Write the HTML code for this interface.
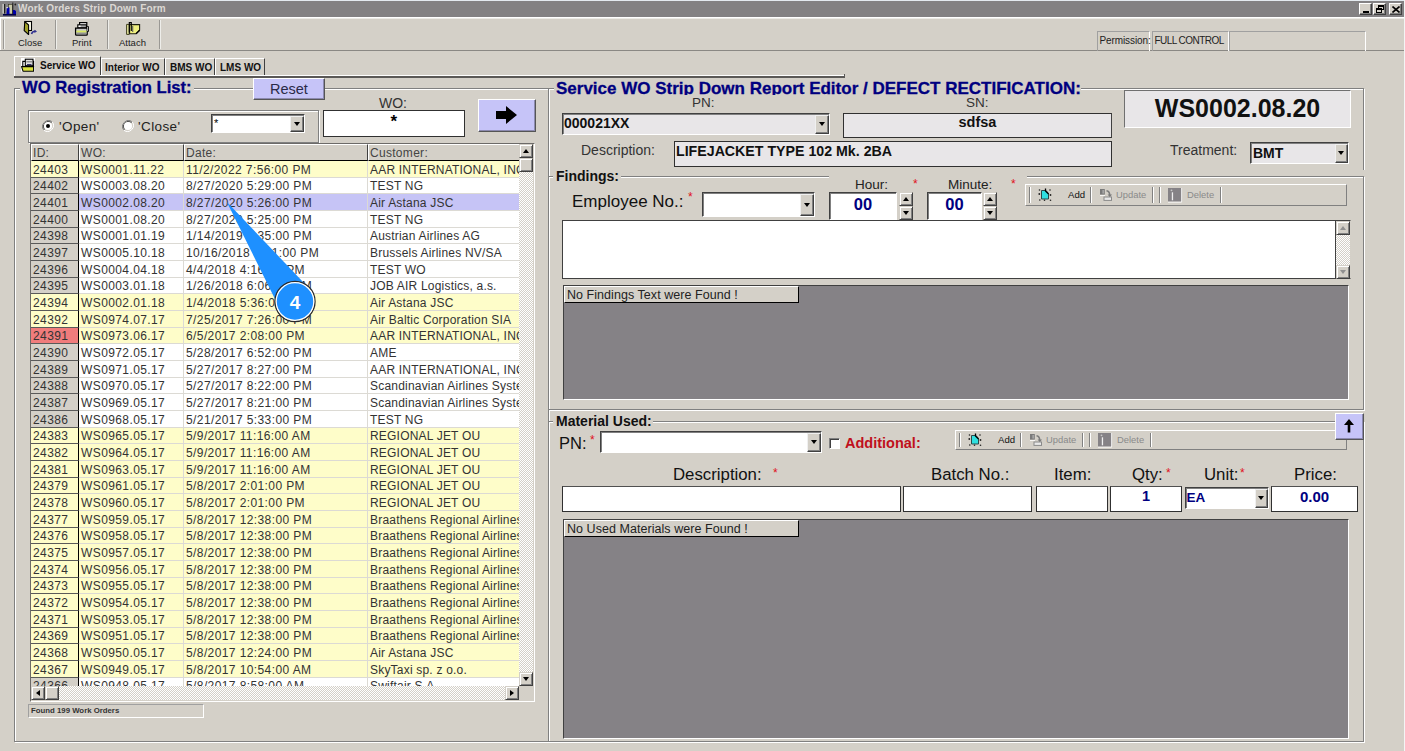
<!DOCTYPE html><html><head><meta charset="utf-8"><title>Work Orders Strip Down Form</title><style>
*{box-sizing:border-box;margin:0;padding:0}
html,body{width:1405px;height:751px;overflow:hidden}
body{position:relative;background:#d4d0c8;font-family:"Liberation Sans",sans-serif;color:#000}
.a{position:absolute}
.t{position:absolute;white-space:nowrap;line-height:1}
.grp{position:absolute;border:1px solid #808080;box-shadow:inset 1px 1px 0 #fff,1px 1px 0 #fff}
.sunk{position:absolute;border-top:1px solid #808080;border-left:1px solid #808080;border-right:1px solid #fff;border-bottom:1px solid #fff}
.raise{position:absolute;border-top:1px solid #fff;border-left:1px solid #fff;border-right:1px solid #404040;border-bottom:1px solid #404040;background:#d4d0c8}
.inp{position:absolute;border:1px solid #404040;border-right-color:#fff;border-bottom-color:#fff;box-shadow:inset 1px 1px 0 #808080}
.box{position:absolute;background:#fff;border:1px solid #303030}
.vsep{position:absolute;width:2px;border-left:1px solid #808080;border-right:1px solid #fff}
</style></head><body>
<div class="a" style="left:0;top:0;width:1405px;height:1px;background:#e4eaf0"></div>
<div class="a" style="left:0;top:1px;width:1404px;height:16px;background:#838183"></div>
<svg class="a" style="left:0px;top:0px" width="18" height="17" viewBox="0 0 18 17">
<rect x="2.6" y="4" width="1" height="9.5" fill="#e8e8e0"/>
<rect x="4" y="4" width="1.2" height="9.5" fill="#202020"/>
<rect x="8.5" y="4.3" width="4" height="9.7" fill="#c8c8a8" stroke="#303020" stroke-width="0.6"/>
<rect x="12.3" y="2.5" width="1" height="11.5" fill="#202020"/>
<circle cx="15.3" cy="4.5" r="0.9" fill="#202020"/>
<path d="M7 7.5 h2.5 v6.5 h-3z" fill="#0000b0"/>
<rect x="6.5" y="7" width="1.2" height="1.2" fill="#fff"/>
<path d="M13 10 h1.5 l1.5 1 v4 h-3z" fill="#0000a8"/>
<rect x="3" y="14" width="13" height="1.6" fill="#000048"/>
</svg>
<div class="t" style="left:18px;top:4px;font-size:10px;font-weight:bold;color:#dcd8d4;letter-spacing:0.15px">Work Orders Strip Down Form</div>
<div class="raise" style="left:1359px;top:3px;width:13px;height:12px;border-right-color:#404040;border-bottom-color:#404040;box-shadow:inset -1px -1px 0 #808080"><div class="a" style="left:3px;top:7px;width:6px;height:2px;background:#000"></div></div>
<div class="raise" style="left:1373px;top:3px;width:13px;height:12px;border-right-color:#404040;border-bottom-color:#404040;box-shadow:inset -1px -1px 0 #808080"><div class="a" style="left:4px;top:1px;width:6px;height:5px;border:1px solid #000;border-top-width:2px"></div><div class="a" style="left:2px;top:4px;width:6px;height:5px;border:1px solid #000;border-top-width:2px;background:#d4d0c8"></div></div>
<div class="raise" style="left:1389px;top:3px;width:13px;height:12px;border-right-color:#404040;border-bottom-color:#404040;box-shadow:inset -1px -1px 0 #808080"><svg class="a" style="left:2px;top:2px" width="8" height="7" viewBox="0 0 8 7"><path d="M0.5 0.5L7.5 6.5M7.5 0.5L0.5 6.5" stroke="#000" stroke-width="1.6"/></svg></div>
<div class="a" style="left:1404px;top:0;width:1px;height:751px;background:#f4f4f4"></div>
<div class="a" style="left:0;top:17px;width:1404px;height:1px;background:#fff"></div>
<div class="a" style="left:0;top:18px;width:1404px;height:1px;background:#ecebe6"></div>
<div class="a" style="left:0;top:17px;width:1px;height:34px;background:#fff"></div>
<div class="a" style="left:0;top:50px;width:1404px;height:1px;background:#8a8884"></div>
<div class="vsep" style="left:3px;top:20px;height:29px;border-left-color:#9a9894;border-right-color:#eeeeea"></div>
<div class="vsep" style="left:55px;top:20px;height:29px;border-left-color:#9a9894;border-right-color:#eeeeea"></div>
<div class="vsep" style="left:107px;top:20px;height:29px;border-left-color:#9a9894;border-right-color:#eeeeea"></div>
<div class="vsep" style="left:159px;top:20px;height:29px;border-left-color:#9a9894;border-right-color:#eeeeea"></div>
<svg class="a" style="left:20px;top:19px" width="22" height="18" viewBox="0 0 22 18">
<rect x="5" y="2.5" width="6.5" height="9" fill="#fffff0" stroke="#000" stroke-width="1.1"/>
<path d="M4.8 2.6 L8.6 6 L8.6 15.5 L4.2 11.6 Z" fill="#a0a028" stroke="#000" stroke-width="1.1" stroke-linejoin="round"/>
<path d="M11.5 15 q1 -3 4 -2.8" stroke="#303090" stroke-width="1.5" fill="none"/>
<path d="M14.5 10.8 l2.5 1.6 l-2.6 1.5z" fill="#303090"/>
</svg>
<div class="t" style="left:18px;top:38px;font-size:9.5px;color:#222">Close</div>
<svg class="a" style="left:70px;top:19px" width="22" height="18" viewBox="0 0 22 18">
<rect x="9.6" y="3.6" width="7.2" height="3" fill="#fff" stroke="#000" stroke-width="1.2"/>
<rect x="7.8" y="5.8" width="8.6" height="3" fill="#a8a8a8" stroke="#000" stroke-width="1.1"/>
<rect x="8.6" y="6.6" width="2" height="1.5" fill="#fff"/>
<path d="M5.6 9.2 h11.6 v6.2 q0 0.8 -0.8 0.8 h-10 q-0.8 0 -0.8 -0.8z" fill="#c8c8c8" stroke="#000" stroke-width="1.3"/>
<rect x="6.4" y="11.6" width="10" height="2" fill="#d8e860"/>
<rect x="6.4" y="13.6" width="10" height="1.6" fill="#909090"/>
<path d="M17.2 7.5 h1.2 v5 h-1.2" fill="#d0d0d0" stroke="#000" stroke-width="1"/>
</svg>
<div class="t" style="left:72px;top:38px;font-size:9.5px;color:#222">Print</div>
<svg class="a" style="left:122px;top:19px" width="22" height="18" viewBox="0 0 22 18">
<path d="M4.6 5.4 h2.6 v10 h-2.6z" fill="#e8e8a0" stroke="#404020" stroke-width="1"/>
<path d="M7.6 5.6 h10 v5.6 l-3.6 3.6 h-6.4z" fill="#f0f080" stroke="#202010" stroke-width="1.1"/>
<path d="M14 14.8 l3.6 -3.6" stroke="#000" stroke-width="1.3"/>
<path d="M7.3 13.5 V3.6 h2 V12" stroke="#000" stroke-width="1.1" fill="none"/>
<rect x="10" y="7" width="1.3" height="6" fill="#707060"/>
</svg>
<div class="t" style="left:119px;top:38px;font-size:9.5px;color:#222">Attach</div>
<div class="a" style="left:1097px;top:31px;width:53px;height:20px;border-left:1px solid #a0a0a0;border-top:1px solid #a0a0a0;border-right:1px solid #fff"></div>
<div class="t" style="left:1099.5px;top:35.5px;font-size:10px;color:#222;letter-spacing:-0.1px">Permission:</div>
<div class="a" style="left:1152px;top:31px;width:77px;height:20px;border-left:1px solid #a0a0a0;border-top:1px solid #a0a0a0;border-right:1px solid #fff"></div>
<div class="t" style="left:1154.5px;top:35.5px;font-size:10px;color:#222;letter-spacing:-0.55px">FULL CONTROL</div>
<div class="a" style="left:1229px;top:31px;width:137px;height:20px;border-left:1px solid #a0a0a0;border-top:1px solid #a0a0a0;border-right:1px solid #fff"></div>
<div class="a" style="left:14px;top:56px;width:87px;height:21px;border-left:1px solid #fff;border-top:1px solid #fff;border-right:1px solid #404040"></div>
<svg class="a" style="left:19px;top:56px" width="18" height="17" viewBox="0 0 18 17">
<rect x="2" y="2" width="14" height="13.6" fill="#fff"/>
<path d="M3.8 11 V5.4 h2.6 M14.6 11 V5.4 h-1.6" stroke="#000" stroke-width="1.1" fill="none"/>
<rect x="6.3" y="3.2" width="7.7" height="6.5" fill="#e0e0e0" stroke="#000" stroke-width="1.1"/>
<rect x="7.4" y="5" width="5.6" height="1.5" fill="#909090"/>
<rect x="8" y="8" width="4.5" height="0.9" fill="#202060"/>
<path d="M2.6 10.6 h12 v4.6 h-10.6z" fill="#d8e040" stroke="#000" stroke-width="1.1" stroke-linejoin="round"/>
</svg>
<div class="t" style="left:40px;top:61px;font-size:10px;font-weight:bold;color:#111">Service WO</div>
<div class="a" style="left:101px;top:58px;width:64px;height:19px;border-left:1px solid #fff;border-top:1px solid #fff;border-right:1px solid #404040"></div>
<div class="t" style="left:105px;top:63px;font-size:10px;font-weight:bold;color:#111">Interior WO</div>
<div class="a" style="left:165px;top:58px;width:50px;height:19px;border-left:1px solid #fff;border-top:1px solid #fff;border-right:1px solid #404040"></div>
<div class="t" style="left:170px;top:63px;font-size:10px;font-weight:bold;color:#111">BMS WO</div>
<div class="a" style="left:215px;top:58px;width:50px;height:19px;border-left:1px solid #fff;border-top:1px solid #fff;border-right:1px solid #404040"></div>
<div class="t" style="left:220px;top:63px;font-size:10px;font-weight:bold;color:#111">LMS WO</div>
<div class="a" style="left:14px;top:75px;width:831px;height:1px;background:#fff"></div>
<div class="a" style="left:14px;top:76px;width:831px;height:2px;background:#5a5856"></div>
<div class="a" style="left:844px;top:74px;width:1px;height:3px;background:#5a5856"></div>
<div class="a" style="left:15px;top:74px;width:85px;height:2px;background:#d4d0c8"></div>
<div class="grp" style="left:14px;top:88px;width:535px;height:654px"></div>
<div class="a" style="left:20px;top:80px;width:174px;height:14px;background:#d4d0c8"></div>
<div class="t" style="left:22px;top:79.8px;font-size:16.6px;font-weight:bold;color:#000080;-webkit-text-stroke:0.3px #000080">WO Registration List:</div>
<div class="a" style="left:253px;top:78px;width:72px;height:22px;background:#c6c4f8;border-top:1px solid #fff;border-left:1px solid #fff;border-right:1px solid #555;border-bottom:1px solid #555;box-shadow:inset -1px -1px 0 #8c8ab0"></div>
<div class="t" style="left:270px;top:82px;font-size:14.5px;color:#2a2a48">Reset</div>
<div class="grp" style="left:28px;top:110px;width:291px;height:33px"></div>
<svg class="a" style="left:42px;top:120px" width="12" height="12" viewBox="0 0 12 12">
<path d="M10.2 1.8 A6 6 0 0 0 1.8 10.2" stroke="#808080" stroke-width="1" fill="none"/>
<path d="M9.5 2.5 A5 5 0 0 0 2.5 9.5" stroke="#404040" stroke-width="1" fill="none"/>
<path d="M1.8 10.2 A6 6 0 0 0 10.2 1.8" stroke="#fff" stroke-width="1" fill="none"/>
<circle cx="6" cy="6" r="4" fill="#fff"/><circle cx="6" cy="6" r="2" fill="#000"/></svg>
<svg class="a" style="left:122px;top:120px" width="12" height="12" viewBox="0 0 12 12">
<path d="M10.2 1.8 A6 6 0 0 0 1.8 10.2" stroke="#808080" stroke-width="1" fill="none"/>
<path d="M9.5 2.5 A5 5 0 0 0 2.5 9.5" stroke="#404040" stroke-width="1" fill="none"/>
<path d="M1.8 10.2 A6 6 0 0 0 10.2 1.8" stroke="#fff" stroke-width="1" fill="none"/>
<circle cx="6" cy="6" r="4" fill="#fff"/></svg>
<div class="t" style="left:59px;top:120px;font-size:13.5px;color:#222;letter-spacing:0.4px">'Open'</div>
<div class="t" style="left:138px;top:120px;font-size:13.5px;color:#222;letter-spacing:0.4px">'Close'</div>
<div class="inp" style="left:211px;top:114px;width:94px;height:19px;background:#fff"></div>
<div class="raise" style="left:290px;top:116px;width:14px;height:16px;box-shadow:inset -1px -1px 0 #808080;border-right-color:#404040;border-bottom-color:#404040;border-top-color:#f0f0f0;border-left-color:#f0f0f0"><div class="a" style="left:3px;top:5px;width:0;height:0;border-left:3.5px solid transparent;border-right:3.5px solid transparent;border-top:4px solid #000"></div></div>
<div class="t" style="left:214px;top:118px;font-size:11px;color:#000">*</div>
<div class="t" style="left:379px;top:96px;font-size:14px;color:#333">WO:</div>
<div class="box" style="left:323px;top:110px;width:142px;height:27px"></div>
<div class="t" style="left:390.5px;top:112.5px;font-size:17px;font-weight:bold;color:#000">*</div>
<div class="a" style="left:478px;top:99px;width:58px;height:33px;background:#c6c4f8;border-top:1px solid #fff;border-left:1px solid #fff;border-right:1px solid #555;border-bottom:1px solid #555;box-shadow:inset -1px -1px 0 #8c8ab0"></div>
<svg class="a" style="left:495px;top:105px" width="23" height="20" viewBox="0 0 23 20">
<path d="M1 6 H11 V1 L22 10 L11 19 V14 H1 Z" fill="#000"/>
</svg>
<div class="a" style="left:30px;top:143px;width:505px;height:559px;border-top:1px solid #6c6a68;border-left:1px solid #6c6a68;border-right:1px solid #fff;border-bottom:1px solid #fff;background:#d4d0c8"></div>
<div class="a" style="left:31px;top:144px;width:488px;height:542px;overflow:hidden">
<div class="a" style="left:0px;top:0;width:48px;height:17px;background:#d4d0c8;border-top:1px solid #fff;border-left:1px solid #fff;border-right:1px solid #404040;border-bottom:1px solid #000"></div>
<div class="t" style="left:2px;top:3px;font-size:12px;color:#444;letter-spacing:0.3px">ID:</div>
<div class="a" style="left:48px;top:0;width:105px;height:17px;background:#d4d0c8;border-top:1px solid #fff;border-left:1px solid #fff;border-right:1px solid #404040;border-bottom:1px solid #000"></div>
<div class="t" style="left:50px;top:3px;font-size:12px;color:#444;letter-spacing:0.3px">WO:</div>
<div class="a" style="left:153px;top:0;width:184px;height:17px;background:#d4d0c8;border-top:1px solid #fff;border-left:1px solid #fff;border-right:1px solid #404040;border-bottom:1px solid #000"></div>
<div class="t" style="left:155px;top:3px;font-size:12px;color:#444;letter-spacing:0.3px">Date:</div>
<div class="a" style="left:337px;top:0;width:161px;height:17px;background:#d4d0c8;border-top:1px solid #fff;border-left:1px solid #fff;border-right:1px solid #404040;border-bottom:1px solid #000"></div>
<div class="t" style="left:339px;top:3px;font-size:12px;color:#444;letter-spacing:0.3px">Customer:</div>
<div class="a" style="left:0;top:17.00px;width:488px;height:16.667px;background:#fefdc9"></div>
<div class="a" style="left:0;top:17.00px;width:48px;height:16.667px;background:#fefdc9;border-bottom:1px solid #5a5a5a;border-right:1px solid #000"></div>
<div class="a" style="left:48px;top:17.00px;width:105px;height:16.667px;border-bottom:1px solid #dcdad4;border-right:1px solid #dcdad4"></div>
<div class="a" style="left:153px;top:17.00px;width:184px;height:16.667px;border-bottom:1px solid #dcdad4;border-right:1px solid #dcdad4"></div>
<div class="a" style="left:337px;top:17.00px;width:161px;height:16.667px;border-bottom:1px solid #dcdad4;border-right:1px solid #dcdad4"></div>
<div class="t" style="left:2px;top:19.60px;font-size:12px;color:#333;letter-spacing:0.4px">24403</div>
<div class="t" style="left:50px;top:19.60px;font-size:12px;color:#333;letter-spacing:0.4px">WS0001.11.22</div>
<div class="t" style="left:155px;top:19.60px;font-size:12px;color:#333;letter-spacing:0.4px">11/2/2022 7:56:00 PM</div>
<div class="t" style="left:339px;top:19.60px;font-size:12px;color:#333;letter-spacing:0.2px">AAR INTERNATIONAL, INC</div>
<div class="a" style="left:0;top:33.67px;width:488px;height:16.667px;background:#ffffff"></div>
<div class="a" style="left:0;top:33.67px;width:48px;height:16.667px;background:#d4d0c8;border-bottom:1px solid #5a5a5a;border-right:1px solid #000"></div>
<div class="a" style="left:48px;top:33.67px;width:105px;height:16.667px;border-bottom:1px solid #dcdad4;border-right:1px solid #dcdad4"></div>
<div class="a" style="left:153px;top:33.67px;width:184px;height:16.667px;border-bottom:1px solid #dcdad4;border-right:1px solid #dcdad4"></div>
<div class="a" style="left:337px;top:33.67px;width:161px;height:16.667px;border-bottom:1px solid #dcdad4;border-right:1px solid #dcdad4"></div>
<div class="t" style="left:2px;top:36.27px;font-size:12px;color:#333;letter-spacing:0.4px">24402</div>
<div class="t" style="left:50px;top:36.27px;font-size:12px;color:#333;letter-spacing:0.4px">WS0003.08.20</div>
<div class="t" style="left:155px;top:36.27px;font-size:12px;color:#333;letter-spacing:0.4px">8/27/2020 5:29:00 PM</div>
<div class="t" style="left:339px;top:36.27px;font-size:12px;color:#333;letter-spacing:0.2px">TEST NG</div>
<div class="a" style="left:0;top:50.33px;width:488px;height:16.667px;background:#c6c4f6"></div>
<div class="a" style="left:0;top:50.33px;width:48px;height:16.667px;background:#d4d0c8;border-bottom:1px solid #5a5a5a;border-right:1px solid #000"></div>
<div class="a" style="left:48px;top:50.33px;width:105px;height:16.667px;border-bottom:1px solid #dcdad4;border-right:1px solid #dcdad4"></div>
<div class="a" style="left:153px;top:50.33px;width:184px;height:16.667px;border-bottom:1px solid #dcdad4;border-right:1px solid #dcdad4"></div>
<div class="a" style="left:337px;top:50.33px;width:161px;height:16.667px;border-bottom:1px solid #dcdad4;border-right:1px solid #dcdad4"></div>
<div class="t" style="left:2px;top:52.93px;font-size:12px;color:#333;letter-spacing:0.4px">24401</div>
<div class="t" style="left:50px;top:52.93px;font-size:12px;color:#333;letter-spacing:0.4px">WS0002.08.20</div>
<div class="t" style="left:155px;top:52.93px;font-size:12px;color:#333;letter-spacing:0.4px">8/27/2020 5:26:00 PM</div>
<div class="t" style="left:339px;top:52.93px;font-size:12px;color:#333;letter-spacing:0.2px">Air Astana JSC</div>
<div class="a" style="left:0;top:67.00px;width:488px;height:16.667px;background:#ffffff"></div>
<div class="a" style="left:0;top:67.00px;width:48px;height:16.667px;background:#d4d0c8;border-bottom:1px solid #5a5a5a;border-right:1px solid #000"></div>
<div class="a" style="left:48px;top:67.00px;width:105px;height:16.667px;border-bottom:1px solid #dcdad4;border-right:1px solid #dcdad4"></div>
<div class="a" style="left:153px;top:67.00px;width:184px;height:16.667px;border-bottom:1px solid #dcdad4;border-right:1px solid #dcdad4"></div>
<div class="a" style="left:337px;top:67.00px;width:161px;height:16.667px;border-bottom:1px solid #dcdad4;border-right:1px solid #dcdad4"></div>
<div class="t" style="left:2px;top:69.60px;font-size:12px;color:#333;letter-spacing:0.4px">24400</div>
<div class="t" style="left:50px;top:69.60px;font-size:12px;color:#333;letter-spacing:0.4px">WS0001.08.20</div>
<div class="t" style="left:155px;top:69.60px;font-size:12px;color:#333;letter-spacing:0.4px">8/27/2020 5:25:00 PM</div>
<div class="t" style="left:339px;top:69.60px;font-size:12px;color:#333;letter-spacing:0.2px">TEST NG</div>
<div class="a" style="left:0;top:83.67px;width:488px;height:16.667px;background:#ffffff"></div>
<div class="a" style="left:0;top:83.67px;width:48px;height:16.667px;background:#d4d0c8;border-bottom:1px solid #5a5a5a;border-right:1px solid #000"></div>
<div class="a" style="left:48px;top:83.67px;width:105px;height:16.667px;border-bottom:1px solid #dcdad4;border-right:1px solid #dcdad4"></div>
<div class="a" style="left:153px;top:83.67px;width:184px;height:16.667px;border-bottom:1px solid #dcdad4;border-right:1px solid #dcdad4"></div>
<div class="a" style="left:337px;top:83.67px;width:161px;height:16.667px;border-bottom:1px solid #dcdad4;border-right:1px solid #dcdad4"></div>
<div class="t" style="left:2px;top:86.27px;font-size:12px;color:#333;letter-spacing:0.4px">24398</div>
<div class="t" style="left:50px;top:86.27px;font-size:12px;color:#333;letter-spacing:0.4px">WS0001.01.19</div>
<div class="t" style="left:155px;top:86.27px;font-size:12px;color:#333;letter-spacing:0.4px">1/14/2019 1:35:00 PM</div>
<div class="t" style="left:339px;top:86.27px;font-size:12px;color:#333;letter-spacing:0.2px">Austrian Airlines AG</div>
<div class="a" style="left:0;top:100.34px;width:488px;height:16.667px;background:#ffffff"></div>
<div class="a" style="left:0;top:100.34px;width:48px;height:16.667px;background:#d4d0c8;border-bottom:1px solid #5a5a5a;border-right:1px solid #000"></div>
<div class="a" style="left:48px;top:100.34px;width:105px;height:16.667px;border-bottom:1px solid #dcdad4;border-right:1px solid #dcdad4"></div>
<div class="a" style="left:153px;top:100.34px;width:184px;height:16.667px;border-bottom:1px solid #dcdad4;border-right:1px solid #dcdad4"></div>
<div class="a" style="left:337px;top:100.34px;width:161px;height:16.667px;border-bottom:1px solid #dcdad4;border-right:1px solid #dcdad4"></div>
<div class="t" style="left:2px;top:102.94px;font-size:12px;color:#333;letter-spacing:0.4px">24397</div>
<div class="t" style="left:50px;top:102.94px;font-size:12px;color:#333;letter-spacing:0.4px">WS0005.10.18</div>
<div class="t" style="left:155px;top:102.94px;font-size:12px;color:#333;letter-spacing:0.4px">10/16/2018 4:41:00 PM</div>
<div class="t" style="left:339px;top:102.94px;font-size:12px;color:#333;letter-spacing:0.2px">Brussels Airlines NV/SA</div>
<div class="a" style="left:0;top:117.00px;width:488px;height:16.667px;background:#ffffff"></div>
<div class="a" style="left:0;top:117.00px;width:48px;height:16.667px;background:#d4d0c8;border-bottom:1px solid #5a5a5a;border-right:1px solid #000"></div>
<div class="a" style="left:48px;top:117.00px;width:105px;height:16.667px;border-bottom:1px solid #dcdad4;border-right:1px solid #dcdad4"></div>
<div class="a" style="left:153px;top:117.00px;width:184px;height:16.667px;border-bottom:1px solid #dcdad4;border-right:1px solid #dcdad4"></div>
<div class="a" style="left:337px;top:117.00px;width:161px;height:16.667px;border-bottom:1px solid #dcdad4;border-right:1px solid #dcdad4"></div>
<div class="t" style="left:2px;top:119.60px;font-size:12px;color:#333;letter-spacing:0.4px">24396</div>
<div class="t" style="left:50px;top:119.60px;font-size:12px;color:#333;letter-spacing:0.4px">WS0004.04.18</div>
<div class="t" style="left:155px;top:119.60px;font-size:12px;color:#333;letter-spacing:0.4px">4/4/2018 4:16:00 PM</div>
<div class="t" style="left:339px;top:119.60px;font-size:12px;color:#333;letter-spacing:0.2px">TEST WO</div>
<div class="a" style="left:0;top:133.67px;width:488px;height:16.667px;background:#ffffff"></div>
<div class="a" style="left:0;top:133.67px;width:48px;height:16.667px;background:#d4d0c8;border-bottom:1px solid #5a5a5a;border-right:1px solid #000"></div>
<div class="a" style="left:48px;top:133.67px;width:105px;height:16.667px;border-bottom:1px solid #dcdad4;border-right:1px solid #dcdad4"></div>
<div class="a" style="left:153px;top:133.67px;width:184px;height:16.667px;border-bottom:1px solid #dcdad4;border-right:1px solid #dcdad4"></div>
<div class="a" style="left:337px;top:133.67px;width:161px;height:16.667px;border-bottom:1px solid #dcdad4;border-right:1px solid #dcdad4"></div>
<div class="t" style="left:2px;top:136.27px;font-size:12px;color:#333;letter-spacing:0.4px">24395</div>
<div class="t" style="left:50px;top:136.27px;font-size:12px;color:#333;letter-spacing:0.4px">WS0003.01.18</div>
<div class="t" style="left:155px;top:136.27px;font-size:12px;color:#333;letter-spacing:0.4px">1/26/2018 6:06:00 PM</div>
<div class="t" style="left:339px;top:136.27px;font-size:12px;color:#333;letter-spacing:0.2px">JOB AIR Logistics, a.s.</div>
<div class="a" style="left:0;top:150.34px;width:488px;height:16.667px;background:#fefdc9"></div>
<div class="a" style="left:0;top:150.34px;width:48px;height:16.667px;background:#fefdc9;border-bottom:1px solid #5a5a5a;border-right:1px solid #000"></div>
<div class="a" style="left:48px;top:150.34px;width:105px;height:16.667px;border-bottom:1px solid #dcdad4;border-right:1px solid #dcdad4"></div>
<div class="a" style="left:153px;top:150.34px;width:184px;height:16.667px;border-bottom:1px solid #dcdad4;border-right:1px solid #dcdad4"></div>
<div class="a" style="left:337px;top:150.34px;width:161px;height:16.667px;border-bottom:1px solid #dcdad4;border-right:1px solid #dcdad4"></div>
<div class="t" style="left:2px;top:152.94px;font-size:12px;color:#333;letter-spacing:0.4px">24394</div>
<div class="t" style="left:50px;top:152.94px;font-size:12px;color:#333;letter-spacing:0.4px">WS0002.01.18</div>
<div class="t" style="left:155px;top:152.94px;font-size:12px;color:#333;letter-spacing:0.4px">1/4/2018 5:36:00 PM</div>
<div class="t" style="left:339px;top:152.94px;font-size:12px;color:#333;letter-spacing:0.2px">Air Astana JSC</div>
<div class="a" style="left:0;top:167.00px;width:488px;height:16.667px;background:#fefdc9"></div>
<div class="a" style="left:0;top:167.00px;width:48px;height:16.667px;background:#fefdc9;border-bottom:1px solid #5a5a5a;border-right:1px solid #000"></div>
<div class="a" style="left:48px;top:167.00px;width:105px;height:16.667px;border-bottom:1px solid #dcdad4;border-right:1px solid #dcdad4"></div>
<div class="a" style="left:153px;top:167.00px;width:184px;height:16.667px;border-bottom:1px solid #dcdad4;border-right:1px solid #dcdad4"></div>
<div class="a" style="left:337px;top:167.00px;width:161px;height:16.667px;border-bottom:1px solid #dcdad4;border-right:1px solid #dcdad4"></div>
<div class="t" style="left:2px;top:169.60px;font-size:12px;color:#333;letter-spacing:0.4px">24392</div>
<div class="t" style="left:50px;top:169.60px;font-size:12px;color:#333;letter-spacing:0.4px">WS0974.07.17</div>
<div class="t" style="left:155px;top:169.60px;font-size:12px;color:#333;letter-spacing:0.4px">7/25/2017 7:26:00 PM</div>
<div class="t" style="left:339px;top:169.60px;font-size:12px;color:#333;letter-spacing:0.2px">Air Baltic Corporation SIA</div>
<div class="a" style="left:0;top:183.67px;width:488px;height:16.667px;background:#fefdc9"></div>
<div class="a" style="left:0;top:183.67px;width:48px;height:16.667px;background:#f07c7c;border-bottom:1px solid #5a5a5a;border-right:1px solid #000"></div>
<div class="a" style="left:48px;top:183.67px;width:105px;height:16.667px;border-bottom:1px solid #dcdad4;border-right:1px solid #dcdad4"></div>
<div class="a" style="left:153px;top:183.67px;width:184px;height:16.667px;border-bottom:1px solid #dcdad4;border-right:1px solid #dcdad4"></div>
<div class="a" style="left:337px;top:183.67px;width:161px;height:16.667px;border-bottom:1px solid #dcdad4;border-right:1px solid #dcdad4"></div>
<div class="t" style="left:2px;top:186.27px;font-size:12px;color:#333;letter-spacing:0.4px">24391</div>
<div class="t" style="left:50px;top:186.27px;font-size:12px;color:#333;letter-spacing:0.4px">WS0973.06.17</div>
<div class="t" style="left:155px;top:186.27px;font-size:12px;color:#333;letter-spacing:0.4px">6/5/2017 2:08:00 PM</div>
<div class="t" style="left:339px;top:186.27px;font-size:12px;color:#333;letter-spacing:0.2px">AAR INTERNATIONAL, INC</div>
<div class="a" style="left:0;top:200.34px;width:488px;height:16.667px;background:#ffffff"></div>
<div class="a" style="left:0;top:200.34px;width:48px;height:16.667px;background:#d4d0c8;border-bottom:1px solid #5a5a5a;border-right:1px solid #000"></div>
<div class="a" style="left:48px;top:200.34px;width:105px;height:16.667px;border-bottom:1px solid #dcdad4;border-right:1px solid #dcdad4"></div>
<div class="a" style="left:153px;top:200.34px;width:184px;height:16.667px;border-bottom:1px solid #dcdad4;border-right:1px solid #dcdad4"></div>
<div class="a" style="left:337px;top:200.34px;width:161px;height:16.667px;border-bottom:1px solid #dcdad4;border-right:1px solid #dcdad4"></div>
<div class="t" style="left:2px;top:202.94px;font-size:12px;color:#333;letter-spacing:0.4px">24390</div>
<div class="t" style="left:50px;top:202.94px;font-size:12px;color:#333;letter-spacing:0.4px">WS0972.05.17</div>
<div class="t" style="left:155px;top:202.94px;font-size:12px;color:#333;letter-spacing:0.4px">5/28/2017 6:52:00 PM</div>
<div class="t" style="left:339px;top:202.94px;font-size:12px;color:#333;letter-spacing:0.2px">AME</div>
<div class="a" style="left:0;top:217.00px;width:488px;height:16.667px;background:#ffffff"></div>
<div class="a" style="left:0;top:217.00px;width:48px;height:16.667px;background:#d4d0c8;border-bottom:1px solid #5a5a5a;border-right:1px solid #000"></div>
<div class="a" style="left:48px;top:217.00px;width:105px;height:16.667px;border-bottom:1px solid #dcdad4;border-right:1px solid #dcdad4"></div>
<div class="a" style="left:153px;top:217.00px;width:184px;height:16.667px;border-bottom:1px solid #dcdad4;border-right:1px solid #dcdad4"></div>
<div class="a" style="left:337px;top:217.00px;width:161px;height:16.667px;border-bottom:1px solid #dcdad4;border-right:1px solid #dcdad4"></div>
<div class="t" style="left:2px;top:219.60px;font-size:12px;color:#333;letter-spacing:0.4px">24389</div>
<div class="t" style="left:50px;top:219.60px;font-size:12px;color:#333;letter-spacing:0.4px">WS0971.05.17</div>
<div class="t" style="left:155px;top:219.60px;font-size:12px;color:#333;letter-spacing:0.4px">5/27/2017 8:27:00 PM</div>
<div class="t" style="left:339px;top:219.60px;font-size:12px;color:#333;letter-spacing:0.2px">AAR INTERNATIONAL, INC</div>
<div class="a" style="left:0;top:233.67px;width:488px;height:16.667px;background:#ffffff"></div>
<div class="a" style="left:0;top:233.67px;width:48px;height:16.667px;background:#d4d0c8;border-bottom:1px solid #5a5a5a;border-right:1px solid #000"></div>
<div class="a" style="left:48px;top:233.67px;width:105px;height:16.667px;border-bottom:1px solid #dcdad4;border-right:1px solid #dcdad4"></div>
<div class="a" style="left:153px;top:233.67px;width:184px;height:16.667px;border-bottom:1px solid #dcdad4;border-right:1px solid #dcdad4"></div>
<div class="a" style="left:337px;top:233.67px;width:161px;height:16.667px;border-bottom:1px solid #dcdad4;border-right:1px solid #dcdad4"></div>
<div class="t" style="left:2px;top:236.27px;font-size:12px;color:#333;letter-spacing:0.4px">24388</div>
<div class="t" style="left:50px;top:236.27px;font-size:12px;color:#333;letter-spacing:0.4px">WS0970.05.17</div>
<div class="t" style="left:155px;top:236.27px;font-size:12px;color:#333;letter-spacing:0.4px">5/27/2017 8:22:00 PM</div>
<div class="t" style="left:339px;top:236.27px;font-size:12px;color:#333;letter-spacing:0.2px">Scandinavian Airlines System</div>
<div class="a" style="left:0;top:250.34px;width:488px;height:16.667px;background:#ffffff"></div>
<div class="a" style="left:0;top:250.34px;width:48px;height:16.667px;background:#d4d0c8;border-bottom:1px solid #5a5a5a;border-right:1px solid #000"></div>
<div class="a" style="left:48px;top:250.34px;width:105px;height:16.667px;border-bottom:1px solid #dcdad4;border-right:1px solid #dcdad4"></div>
<div class="a" style="left:153px;top:250.34px;width:184px;height:16.667px;border-bottom:1px solid #dcdad4;border-right:1px solid #dcdad4"></div>
<div class="a" style="left:337px;top:250.34px;width:161px;height:16.667px;border-bottom:1px solid #dcdad4;border-right:1px solid #dcdad4"></div>
<div class="t" style="left:2px;top:252.94px;font-size:12px;color:#333;letter-spacing:0.4px">24387</div>
<div class="t" style="left:50px;top:252.94px;font-size:12px;color:#333;letter-spacing:0.4px">WS0969.05.17</div>
<div class="t" style="left:155px;top:252.94px;font-size:12px;color:#333;letter-spacing:0.4px">5/27/2017 8:21:00 PM</div>
<div class="t" style="left:339px;top:252.94px;font-size:12px;color:#333;letter-spacing:0.2px">Scandinavian Airlines System</div>
<div class="a" style="left:0;top:267.00px;width:488px;height:16.667px;background:#ffffff"></div>
<div class="a" style="left:0;top:267.00px;width:48px;height:16.667px;background:#d4d0c8;border-bottom:1px solid #5a5a5a;border-right:1px solid #000"></div>
<div class="a" style="left:48px;top:267.00px;width:105px;height:16.667px;border-bottom:1px solid #dcdad4;border-right:1px solid #dcdad4"></div>
<div class="a" style="left:153px;top:267.00px;width:184px;height:16.667px;border-bottom:1px solid #dcdad4;border-right:1px solid #dcdad4"></div>
<div class="a" style="left:337px;top:267.00px;width:161px;height:16.667px;border-bottom:1px solid #dcdad4;border-right:1px solid #dcdad4"></div>
<div class="t" style="left:2px;top:269.61px;font-size:12px;color:#333;letter-spacing:0.4px">24386</div>
<div class="t" style="left:50px;top:269.61px;font-size:12px;color:#333;letter-spacing:0.4px">WS0968.05.17</div>
<div class="t" style="left:155px;top:269.61px;font-size:12px;color:#333;letter-spacing:0.4px">5/21/2017 5:33:00 PM</div>
<div class="t" style="left:339px;top:269.61px;font-size:12px;color:#333;letter-spacing:0.2px">TEST NG</div>
<div class="a" style="left:0;top:283.67px;width:488px;height:16.667px;background:#fefdc9"></div>
<div class="a" style="left:0;top:283.67px;width:48px;height:16.667px;background:#fefdc9;border-bottom:1px solid #5a5a5a;border-right:1px solid #000"></div>
<div class="a" style="left:48px;top:283.67px;width:105px;height:16.667px;border-bottom:1px solid #dcdad4;border-right:1px solid #dcdad4"></div>
<div class="a" style="left:153px;top:283.67px;width:184px;height:16.667px;border-bottom:1px solid #dcdad4;border-right:1px solid #dcdad4"></div>
<div class="a" style="left:337px;top:283.67px;width:161px;height:16.667px;border-bottom:1px solid #dcdad4;border-right:1px solid #dcdad4"></div>
<div class="t" style="left:2px;top:286.27px;font-size:12px;color:#333;letter-spacing:0.4px">24383</div>
<div class="t" style="left:50px;top:286.27px;font-size:12px;color:#333;letter-spacing:0.4px">WS0965.05.17</div>
<div class="t" style="left:155px;top:286.27px;font-size:12px;color:#333;letter-spacing:0.4px">5/9/2017 11:16:00 AM</div>
<div class="t" style="left:339px;top:286.27px;font-size:12px;color:#333;letter-spacing:0.2px">REGIONAL JET OU</div>
<div class="a" style="left:0;top:300.34px;width:488px;height:16.667px;background:#fefdc9"></div>
<div class="a" style="left:0;top:300.34px;width:48px;height:16.667px;background:#fefdc9;border-bottom:1px solid #5a5a5a;border-right:1px solid #000"></div>
<div class="a" style="left:48px;top:300.34px;width:105px;height:16.667px;border-bottom:1px solid #dcdad4;border-right:1px solid #dcdad4"></div>
<div class="a" style="left:153px;top:300.34px;width:184px;height:16.667px;border-bottom:1px solid #dcdad4;border-right:1px solid #dcdad4"></div>
<div class="a" style="left:337px;top:300.34px;width:161px;height:16.667px;border-bottom:1px solid #dcdad4;border-right:1px solid #dcdad4"></div>
<div class="t" style="left:2px;top:302.94px;font-size:12px;color:#333;letter-spacing:0.4px">24382</div>
<div class="t" style="left:50px;top:302.94px;font-size:12px;color:#333;letter-spacing:0.4px">WS0964.05.17</div>
<div class="t" style="left:155px;top:302.94px;font-size:12px;color:#333;letter-spacing:0.4px">5/9/2017 11:16:00 AM</div>
<div class="t" style="left:339px;top:302.94px;font-size:12px;color:#333;letter-spacing:0.2px">REGIONAL JET OU</div>
<div class="a" style="left:0;top:317.01px;width:488px;height:16.667px;background:#fefdc9"></div>
<div class="a" style="left:0;top:317.01px;width:48px;height:16.667px;background:#fefdc9;border-bottom:1px solid #5a5a5a;border-right:1px solid #000"></div>
<div class="a" style="left:48px;top:317.01px;width:105px;height:16.667px;border-bottom:1px solid #dcdad4;border-right:1px solid #dcdad4"></div>
<div class="a" style="left:153px;top:317.01px;width:184px;height:16.667px;border-bottom:1px solid #dcdad4;border-right:1px solid #dcdad4"></div>
<div class="a" style="left:337px;top:317.01px;width:161px;height:16.667px;border-bottom:1px solid #dcdad4;border-right:1px solid #dcdad4"></div>
<div class="t" style="left:2px;top:319.61px;font-size:12px;color:#333;letter-spacing:0.4px">24381</div>
<div class="t" style="left:50px;top:319.61px;font-size:12px;color:#333;letter-spacing:0.4px">WS0963.05.17</div>
<div class="t" style="left:155px;top:319.61px;font-size:12px;color:#333;letter-spacing:0.4px">5/9/2017 11:16:00 AM</div>
<div class="t" style="left:339px;top:319.61px;font-size:12px;color:#333;letter-spacing:0.2px">REGIONAL JET OU</div>
<div class="a" style="left:0;top:333.67px;width:488px;height:16.667px;background:#fefdc9"></div>
<div class="a" style="left:0;top:333.67px;width:48px;height:16.667px;background:#fefdc9;border-bottom:1px solid #5a5a5a;border-right:1px solid #000"></div>
<div class="a" style="left:48px;top:333.67px;width:105px;height:16.667px;border-bottom:1px solid #dcdad4;border-right:1px solid #dcdad4"></div>
<div class="a" style="left:153px;top:333.67px;width:184px;height:16.667px;border-bottom:1px solid #dcdad4;border-right:1px solid #dcdad4"></div>
<div class="a" style="left:337px;top:333.67px;width:161px;height:16.667px;border-bottom:1px solid #dcdad4;border-right:1px solid #dcdad4"></div>
<div class="t" style="left:2px;top:336.27px;font-size:12px;color:#333;letter-spacing:0.4px">24379</div>
<div class="t" style="left:50px;top:336.27px;font-size:12px;color:#333;letter-spacing:0.4px">WS0961.05.17</div>
<div class="t" style="left:155px;top:336.27px;font-size:12px;color:#333;letter-spacing:0.4px">5/8/2017 2:01:00 PM</div>
<div class="t" style="left:339px;top:336.27px;font-size:12px;color:#333;letter-spacing:0.2px">REGIONAL JET OU</div>
<div class="a" style="left:0;top:350.34px;width:488px;height:16.667px;background:#fefdc9"></div>
<div class="a" style="left:0;top:350.34px;width:48px;height:16.667px;background:#fefdc9;border-bottom:1px solid #5a5a5a;border-right:1px solid #000"></div>
<div class="a" style="left:48px;top:350.34px;width:105px;height:16.667px;border-bottom:1px solid #dcdad4;border-right:1px solid #dcdad4"></div>
<div class="a" style="left:153px;top:350.34px;width:184px;height:16.667px;border-bottom:1px solid #dcdad4;border-right:1px solid #dcdad4"></div>
<div class="a" style="left:337px;top:350.34px;width:161px;height:16.667px;border-bottom:1px solid #dcdad4;border-right:1px solid #dcdad4"></div>
<div class="t" style="left:2px;top:352.94px;font-size:12px;color:#333;letter-spacing:0.4px">24378</div>
<div class="t" style="left:50px;top:352.94px;font-size:12px;color:#333;letter-spacing:0.4px">WS0960.05.17</div>
<div class="t" style="left:155px;top:352.94px;font-size:12px;color:#333;letter-spacing:0.4px">5/8/2017 2:01:00 PM</div>
<div class="t" style="left:339px;top:352.94px;font-size:12px;color:#333;letter-spacing:0.2px">REGIONAL JET OU</div>
<div class="a" style="left:0;top:367.01px;width:488px;height:16.667px;background:#fefdc9"></div>
<div class="a" style="left:0;top:367.01px;width:48px;height:16.667px;background:#fefdc9;border-bottom:1px solid #5a5a5a;border-right:1px solid #000"></div>
<div class="a" style="left:48px;top:367.01px;width:105px;height:16.667px;border-bottom:1px solid #dcdad4;border-right:1px solid #dcdad4"></div>
<div class="a" style="left:153px;top:367.01px;width:184px;height:16.667px;border-bottom:1px solid #dcdad4;border-right:1px solid #dcdad4"></div>
<div class="a" style="left:337px;top:367.01px;width:161px;height:16.667px;border-bottom:1px solid #dcdad4;border-right:1px solid #dcdad4"></div>
<div class="t" style="left:2px;top:369.61px;font-size:12px;color:#333;letter-spacing:0.4px">24377</div>
<div class="t" style="left:50px;top:369.61px;font-size:12px;color:#333;letter-spacing:0.4px">WS0959.05.17</div>
<div class="t" style="left:155px;top:369.61px;font-size:12px;color:#333;letter-spacing:0.4px">5/8/2017 12:38:00 PM</div>
<div class="t" style="left:339px;top:369.61px;font-size:12px;color:#333;letter-spacing:0.2px">Braathens Regional Airlines</div>
<div class="a" style="left:0;top:383.67px;width:488px;height:16.667px;background:#fefdc9"></div>
<div class="a" style="left:0;top:383.67px;width:48px;height:16.667px;background:#fefdc9;border-bottom:1px solid #5a5a5a;border-right:1px solid #000"></div>
<div class="a" style="left:48px;top:383.67px;width:105px;height:16.667px;border-bottom:1px solid #dcdad4;border-right:1px solid #dcdad4"></div>
<div class="a" style="left:153px;top:383.67px;width:184px;height:16.667px;border-bottom:1px solid #dcdad4;border-right:1px solid #dcdad4"></div>
<div class="a" style="left:337px;top:383.67px;width:161px;height:16.667px;border-bottom:1px solid #dcdad4;border-right:1px solid #dcdad4"></div>
<div class="t" style="left:2px;top:386.27px;font-size:12px;color:#333;letter-spacing:0.4px">24376</div>
<div class="t" style="left:50px;top:386.27px;font-size:12px;color:#333;letter-spacing:0.4px">WS0958.05.17</div>
<div class="t" style="left:155px;top:386.27px;font-size:12px;color:#333;letter-spacing:0.4px">5/8/2017 12:38:00 PM</div>
<div class="t" style="left:339px;top:386.27px;font-size:12px;color:#333;letter-spacing:0.2px">Braathens Regional Airlines</div>
<div class="a" style="left:0;top:400.34px;width:488px;height:16.667px;background:#fefdc9"></div>
<div class="a" style="left:0;top:400.34px;width:48px;height:16.667px;background:#fefdc9;border-bottom:1px solid #5a5a5a;border-right:1px solid #000"></div>
<div class="a" style="left:48px;top:400.34px;width:105px;height:16.667px;border-bottom:1px solid #dcdad4;border-right:1px solid #dcdad4"></div>
<div class="a" style="left:153px;top:400.34px;width:184px;height:16.667px;border-bottom:1px solid #dcdad4;border-right:1px solid #dcdad4"></div>
<div class="a" style="left:337px;top:400.34px;width:161px;height:16.667px;border-bottom:1px solid #dcdad4;border-right:1px solid #dcdad4"></div>
<div class="t" style="left:2px;top:402.94px;font-size:12px;color:#333;letter-spacing:0.4px">24375</div>
<div class="t" style="left:50px;top:402.94px;font-size:12px;color:#333;letter-spacing:0.4px">WS0957.05.17</div>
<div class="t" style="left:155px;top:402.94px;font-size:12px;color:#333;letter-spacing:0.4px">5/8/2017 12:38:00 PM</div>
<div class="t" style="left:339px;top:402.94px;font-size:12px;color:#333;letter-spacing:0.2px">Braathens Regional Airlines</div>
<div class="a" style="left:0;top:417.01px;width:488px;height:16.667px;background:#fefdc9"></div>
<div class="a" style="left:0;top:417.01px;width:48px;height:16.667px;background:#fefdc9;border-bottom:1px solid #5a5a5a;border-right:1px solid #000"></div>
<div class="a" style="left:48px;top:417.01px;width:105px;height:16.667px;border-bottom:1px solid #dcdad4;border-right:1px solid #dcdad4"></div>
<div class="a" style="left:153px;top:417.01px;width:184px;height:16.667px;border-bottom:1px solid #dcdad4;border-right:1px solid #dcdad4"></div>
<div class="a" style="left:337px;top:417.01px;width:161px;height:16.667px;border-bottom:1px solid #dcdad4;border-right:1px solid #dcdad4"></div>
<div class="t" style="left:2px;top:419.61px;font-size:12px;color:#333;letter-spacing:0.4px">24374</div>
<div class="t" style="left:50px;top:419.61px;font-size:12px;color:#333;letter-spacing:0.4px">WS0956.05.17</div>
<div class="t" style="left:155px;top:419.61px;font-size:12px;color:#333;letter-spacing:0.4px">5/8/2017 12:38:00 PM</div>
<div class="t" style="left:339px;top:419.61px;font-size:12px;color:#333;letter-spacing:0.2px">Braathens Regional Airlines</div>
<div class="a" style="left:0;top:433.68px;width:488px;height:16.667px;background:#fefdc9"></div>
<div class="a" style="left:0;top:433.68px;width:48px;height:16.667px;background:#fefdc9;border-bottom:1px solid #5a5a5a;border-right:1px solid #000"></div>
<div class="a" style="left:48px;top:433.68px;width:105px;height:16.667px;border-bottom:1px solid #dcdad4;border-right:1px solid #dcdad4"></div>
<div class="a" style="left:153px;top:433.68px;width:184px;height:16.667px;border-bottom:1px solid #dcdad4;border-right:1px solid #dcdad4"></div>
<div class="a" style="left:337px;top:433.68px;width:161px;height:16.667px;border-bottom:1px solid #dcdad4;border-right:1px solid #dcdad4"></div>
<div class="t" style="left:2px;top:436.28px;font-size:12px;color:#333;letter-spacing:0.4px">24373</div>
<div class="t" style="left:50px;top:436.28px;font-size:12px;color:#333;letter-spacing:0.4px">WS0955.05.17</div>
<div class="t" style="left:155px;top:436.28px;font-size:12px;color:#333;letter-spacing:0.4px">5/8/2017 12:38:00 PM</div>
<div class="t" style="left:339px;top:436.28px;font-size:12px;color:#333;letter-spacing:0.2px">Braathens Regional Airlines</div>
<div class="a" style="left:0;top:450.34px;width:488px;height:16.667px;background:#fefdc9"></div>
<div class="a" style="left:0;top:450.34px;width:48px;height:16.667px;background:#fefdc9;border-bottom:1px solid #5a5a5a;border-right:1px solid #000"></div>
<div class="a" style="left:48px;top:450.34px;width:105px;height:16.667px;border-bottom:1px solid #dcdad4;border-right:1px solid #dcdad4"></div>
<div class="a" style="left:153px;top:450.34px;width:184px;height:16.667px;border-bottom:1px solid #dcdad4;border-right:1px solid #dcdad4"></div>
<div class="a" style="left:337px;top:450.34px;width:161px;height:16.667px;border-bottom:1px solid #dcdad4;border-right:1px solid #dcdad4"></div>
<div class="t" style="left:2px;top:452.94px;font-size:12px;color:#333;letter-spacing:0.4px">24372</div>
<div class="t" style="left:50px;top:452.94px;font-size:12px;color:#333;letter-spacing:0.4px">WS0954.05.17</div>
<div class="t" style="left:155px;top:452.94px;font-size:12px;color:#333;letter-spacing:0.4px">5/8/2017 12:38:00 PM</div>
<div class="t" style="left:339px;top:452.94px;font-size:12px;color:#333;letter-spacing:0.2px">Braathens Regional Airlines</div>
<div class="a" style="left:0;top:467.01px;width:488px;height:16.667px;background:#fefdc9"></div>
<div class="a" style="left:0;top:467.01px;width:48px;height:16.667px;background:#fefdc9;border-bottom:1px solid #5a5a5a;border-right:1px solid #000"></div>
<div class="a" style="left:48px;top:467.01px;width:105px;height:16.667px;border-bottom:1px solid #dcdad4;border-right:1px solid #dcdad4"></div>
<div class="a" style="left:153px;top:467.01px;width:184px;height:16.667px;border-bottom:1px solid #dcdad4;border-right:1px solid #dcdad4"></div>
<div class="a" style="left:337px;top:467.01px;width:161px;height:16.667px;border-bottom:1px solid #dcdad4;border-right:1px solid #dcdad4"></div>
<div class="t" style="left:2px;top:469.61px;font-size:12px;color:#333;letter-spacing:0.4px">24371</div>
<div class="t" style="left:50px;top:469.61px;font-size:12px;color:#333;letter-spacing:0.4px">WS0953.05.17</div>
<div class="t" style="left:155px;top:469.61px;font-size:12px;color:#333;letter-spacing:0.4px">5/8/2017 12:38:00 PM</div>
<div class="t" style="left:339px;top:469.61px;font-size:12px;color:#333;letter-spacing:0.2px">Braathens Regional Airlines</div>
<div class="a" style="left:0;top:483.68px;width:488px;height:16.667px;background:#fefdc9"></div>
<div class="a" style="left:0;top:483.68px;width:48px;height:16.667px;background:#fefdc9;border-bottom:1px solid #5a5a5a;border-right:1px solid #000"></div>
<div class="a" style="left:48px;top:483.68px;width:105px;height:16.667px;border-bottom:1px solid #dcdad4;border-right:1px solid #dcdad4"></div>
<div class="a" style="left:153px;top:483.68px;width:184px;height:16.667px;border-bottom:1px solid #dcdad4;border-right:1px solid #dcdad4"></div>
<div class="a" style="left:337px;top:483.68px;width:161px;height:16.667px;border-bottom:1px solid #dcdad4;border-right:1px solid #dcdad4"></div>
<div class="t" style="left:2px;top:486.28px;font-size:12px;color:#333;letter-spacing:0.4px">24369</div>
<div class="t" style="left:50px;top:486.28px;font-size:12px;color:#333;letter-spacing:0.4px">WS0951.05.17</div>
<div class="t" style="left:155px;top:486.28px;font-size:12px;color:#333;letter-spacing:0.4px">5/8/2017 12:38:00 PM</div>
<div class="t" style="left:339px;top:486.28px;font-size:12px;color:#333;letter-spacing:0.2px">Braathens Regional Airlines</div>
<div class="a" style="left:0;top:500.34px;width:488px;height:16.667px;background:#fefdc9"></div>
<div class="a" style="left:0;top:500.34px;width:48px;height:16.667px;background:#fefdc9;border-bottom:1px solid #5a5a5a;border-right:1px solid #000"></div>
<div class="a" style="left:48px;top:500.34px;width:105px;height:16.667px;border-bottom:1px solid #dcdad4;border-right:1px solid #dcdad4"></div>
<div class="a" style="left:153px;top:500.34px;width:184px;height:16.667px;border-bottom:1px solid #dcdad4;border-right:1px solid #dcdad4"></div>
<div class="a" style="left:337px;top:500.34px;width:161px;height:16.667px;border-bottom:1px solid #dcdad4;border-right:1px solid #dcdad4"></div>
<div class="t" style="left:2px;top:502.94px;font-size:12px;color:#333;letter-spacing:0.4px">24368</div>
<div class="t" style="left:50px;top:502.94px;font-size:12px;color:#333;letter-spacing:0.4px">WS0950.05.17</div>
<div class="t" style="left:155px;top:502.94px;font-size:12px;color:#333;letter-spacing:0.4px">5/8/2017 12:24:00 PM</div>
<div class="t" style="left:339px;top:502.94px;font-size:12px;color:#333;letter-spacing:0.2px">Air Astana JSC</div>
<div class="a" style="left:0;top:517.01px;width:488px;height:16.667px;background:#fefdc9"></div>
<div class="a" style="left:0;top:517.01px;width:48px;height:16.667px;background:#fefdc9;border-bottom:1px solid #5a5a5a;border-right:1px solid #000"></div>
<div class="a" style="left:48px;top:517.01px;width:105px;height:16.667px;border-bottom:1px solid #dcdad4;border-right:1px solid #dcdad4"></div>
<div class="a" style="left:153px;top:517.01px;width:184px;height:16.667px;border-bottom:1px solid #dcdad4;border-right:1px solid #dcdad4"></div>
<div class="a" style="left:337px;top:517.01px;width:161px;height:16.667px;border-bottom:1px solid #dcdad4;border-right:1px solid #dcdad4"></div>
<div class="t" style="left:2px;top:519.61px;font-size:12px;color:#333;letter-spacing:0.4px">24367</div>
<div class="t" style="left:50px;top:519.61px;font-size:12px;color:#333;letter-spacing:0.4px">WS0949.05.17</div>
<div class="t" style="left:155px;top:519.61px;font-size:12px;color:#333;letter-spacing:0.4px">5/8/2017 10:54:00 AM</div>
<div class="t" style="left:339px;top:519.61px;font-size:12px;color:#333;letter-spacing:0.2px">SkyTaxi sp. z o.o.</div>
<div class="a" style="left:0;top:533.68px;width:488px;height:16.667px;background:#ffffff"></div>
<div class="a" style="left:0;top:533.68px;width:48px;height:16.667px;background:#d4d0c8;border-bottom:1px solid #5a5a5a;border-right:1px solid #000"></div>
<div class="a" style="left:48px;top:533.68px;width:105px;height:16.667px;border-bottom:1px solid #dcdad4;border-right:1px solid #dcdad4"></div>
<div class="a" style="left:153px;top:533.68px;width:184px;height:16.667px;border-bottom:1px solid #dcdad4;border-right:1px solid #dcdad4"></div>
<div class="a" style="left:337px;top:533.68px;width:161px;height:16.667px;border-bottom:1px solid #dcdad4;border-right:1px solid #dcdad4"></div>
<div class="t" style="left:2px;top:536.28px;font-size:12px;color:#333;letter-spacing:0.4px">24366</div>
<div class="t" style="left:50px;top:536.28px;font-size:12px;color:#333;letter-spacing:0.4px">WS0948.05.17</div>
<div class="t" style="left:155px;top:536.28px;font-size:12px;color:#333;letter-spacing:0.4px">5/8/2017 8:58:00 AM</div>
<div class="t" style="left:339px;top:536.28px;font-size:12px;color:#333;letter-spacing:0.2px">Swiftair S.A.</div>
</div>
<div class="a" style="left:519px;top:144px;width:14px;height:542px;background-color:#ece9e4;background-image:repeating-conic-gradient(#fff 0 25%, #d4d0c8 0 50%);background-size:2px 2px"></div>
<div class="a" style="left:519px;top:144px;width:14px;height:14px;background:#d4d0c8;border-top:1px solid #d4d0c8;border-left:1px solid #d4d0c8;border-right:1px solid #404040;border-bottom:1px solid #404040;box-shadow:inset 1px 1px 0 #fff,inset -1px -1px 0 #808080"><div class="a" style="left:50%;top:50%;transform:translate(-50%,-50%);width:0;height:0;border-left:3.5px solid transparent;border-right:3.5px solid transparent;border-bottom:4px solid #000"></div></div>
<div class="a" style="left:519px;top:158px;width:14px;height:14px;background:#d4d0c8;border-top:1px solid #d4d0c8;border-left:1px solid #d4d0c8;border-right:1px solid #404040;border-bottom:1px solid #404040;box-shadow:inset 1px 1px 0 #fff,inset -1px -1px 0 #808080"></div>
<div class="a" style="left:519px;top:672px;width:14px;height:14px;background:#d4d0c8;border-top:1px solid #d4d0c8;border-left:1px solid #d4d0c8;border-right:1px solid #404040;border-bottom:1px solid #404040;box-shadow:inset 1px 1px 0 #fff,inset -1px -1px 0 #808080"><div class="a" style="left:50%;top:50%;transform:translate(-50%,-50%);width:0;height:0;border-left:3.5px solid transparent;border-right:3.5px solid transparent;border-top:4px solid #000"></div></div>
<div class="a" style="left:31px;top:686px;width:488px;height:14px;background-color:#ece9e4;background-image:repeating-conic-gradient(#fff 0 25%, #d4d0c8 0 50%);background-size:2px 2px"></div>
<div class="a" style="left:31px;top:686px;width:14px;height:14px;background:#d4d0c8;border-top:1px solid #d4d0c8;border-left:1px solid #d4d0c8;border-right:1px solid #404040;border-bottom:1px solid #404040;box-shadow:inset 1px 1px 0 #fff,inset -1px -1px 0 #808080"><div class="a" style="left:50%;top:50%;transform:translate(-50%,-50%);width:0;height:0;border-top:3.5px solid transparent;border-bottom:3.5px solid transparent;border-right:4px solid #000"></div></div>
<div class="a" style="left:45px;top:686px;width:14px;height:14px;background:#d4d0c8;border-top:1px solid #d4d0c8;border-left:1px solid #d4d0c8;border-right:1px solid #404040;border-bottom:1px solid #404040;box-shadow:inset 1px 1px 0 #fff,inset -1px -1px 0 #808080"></div>
<div class="a" style="left:505px;top:686px;width:14px;height:14px;background:#d4d0c8;border-top:1px solid #d4d0c8;border-left:1px solid #d4d0c8;border-right:1px solid #404040;border-bottom:1px solid #404040;box-shadow:inset 1px 1px 0 #fff,inset -1px -1px 0 #808080"><div class="a" style="left:50%;top:50%;transform:translate(-50%,-50%);width:0;height:0;border-top:3.5px solid transparent;border-bottom:3.5px solid transparent;border-left:4px solid #000"></div></div>
<div class="a" style="left:28px;top:704px;width:176px;height:14px;border-top:1px solid #a0a0a0;border-left:1px solid #a0a0a0;border-right:1px solid #fff;border-bottom:1px solid #fff"></div>
<div class="t" style="left:31px;top:706.5px;font-size:7.8px;font-weight:bold;color:#333;letter-spacing:0px;word-spacing:0px">Found 199 Work Orders</div>
<div class="grp" style="left:548px;top:88px;width:816px;height:100px"></div>
<div class="a" style="left:554px;top:80px;width:527px;height:16px;background:#d4d0c8"></div>
<div class="t" style="left:556px;top:79.5px;font-size:17px;font-weight:bold;color:#000080;-webkit-text-stroke:0.3px #000080;height:15px;overflow:hidden;line-height:17px">Service WO Strip Down Report Editor / DEFECT RECTIFICATION:</div>
<div class="t" style="left:692px;top:96px;font-size:13.5px;color:#333">PN:</div>
<div class="t" style="left:966px;top:96px;font-size:13.5px;color:#333">SN:</div>
<div class="inp" style="left:562px;top:113px;width:268px;height:22px;background:#e8e6e8"></div>
<div class="raise" style="left:815px;top:115px;width:14px;height:19px;box-shadow:inset -1px -1px 0 #808080;border-right-color:#404040;border-bottom-color:#404040;border-top-color:#f0f0f0;border-left-color:#f0f0f0"><div class="a" style="left:3px;top:6px;width:0;height:0;border-left:3.5px solid transparent;border-right:3.5px solid transparent;border-top:4px solid #000"></div></div>
<div class="t" style="left:564px;top:116.1px;font-size:14px;font-weight:bold;color:#111">000021XX</div>
<div class="a" style="left:843px;top:113px;width:269px;height:25px;background:#e8e6e8;border:1px solid #303030;border-right-color:#404040"></div>
<div class="t" style="left:843px;top:115px;width:269px;text-align:center;font-size:14.5px;font-weight:bold;color:#111">sdfsa</div>
<div class="t" style="left:581px;top:142.5px;font-size:14px;color:#333">Description:</div>
<div class="a" style="left:674px;top:141px;width:438px;height:26px;background:#e8e6e8;border:1px solid #303030"></div>
<div class="t" style="left:676px;top:144.2px;font-size:14.2px;font-weight:bold;color:#111">LIFEJACKET TYPE 102 Mk. 2BA</div>
<div class="a" style="left:1124px;top:90px;width:227px;height:38px;background:#e8e6e8;border-top:1px solid #707070;border-left:1px solid #707070;border-right:1px solid #fff;border-bottom:1px solid #fff"></div>
<div class="t" style="left:1124px;top:96px;width:227px;text-align:center;font-size:25px;font-weight:bold;color:#111">WS0002.08.20</div>
<div class="t" style="left:1170px;top:143.3px;font-size:14px;color:#333">Treatment:</div>
<div class="inp" style="left:1250px;top:142px;width:99px;height:22px;background:#e8e6e8"></div>
<div class="raise" style="left:1335px;top:144px;width:13px;height:19px;box-shadow:inset -1px -1px 0 #808080;border-right-color:#404040;border-bottom-color:#404040;border-top-color:#f0f0f0;border-left-color:#f0f0f0"><div class="a" style="left:2px;top:6px;width:0;height:0;border-left:3.5px solid transparent;border-right:3.5px solid transparent;border-top:4px solid #000"></div></div>
<div class="t" style="left:1253px;top:146px;font-size:14px;font-weight:bold;color:#111">BMT</div>
<div class="a" style="left:548px;top:170px;width:818px;height:240px;background:#d4d0c8"></div>
<div class="a" style="left:548px;top:167px;width:2px;height:10px;border-left:1px solid #808080;border-right:1px solid #fff"></div>
<div class="grp" style="left:548px;top:176px;width:816px;height:234px"></div>
<div class="a" style="left:553px;top:169px;width:68px;height:14px;background:#d4d0c8"></div>
<div class="t" style="left:556px;top:169px;font-size:14px;font-weight:bold;color:#111">Findings:</div>
<div class="a" style="left:829px;top:172px;width:198px;height:12px;background:#d4d0c8"></div>
<div class="t" style="left:572px;top:192.8px;font-size:17px;color:#111">Employee No.:</div>
<div class="t" style="left:688px;top:191px;color:#e01020;font-size:12px">*</div>
<div class="inp" style="left:702px;top:192px;width:113px;height:25px;background:#fff"></div>
<div class="raise" style="left:800px;top:194px;width:14px;height:22px;box-shadow:inset -1px -1px 0 #808080;border-right-color:#404040;border-bottom-color:#404040;border-top-color:#f0f0f0;border-left-color:#f0f0f0"><div class="a" style="left:3px;top:8px;width:0;height:0;border-left:3.5px solid transparent;border-right:3.5px solid transparent;border-top:4px solid #000"></div></div>
<div class="t" style="left:855px;top:177.6px;font-size:13.5px;color:#222">Hour:</div>
<div class="t" style="left:913px;top:178px;color:#e01020;font-size:12px">*</div>
<div class="t" style="left:948px;top:177.6px;font-size:13.5px;color:#222">Minute:</div>
<div class="t" style="left:1011px;top:178px;color:#e01020;font-size:12px">*</div>
<div class="inp" style="left:829px;top:192px;width:68px;height:28px;background:#fff"></div>
<div class="t" style="left:829px;top:195.6px;width:68px;text-align:center;font-size:16.5px;font-weight:bold;color:#000080">00</div>
<div class="a" style="left:899px;top:192px;width:14px;height:14px;background:#d4d0c8;border-top:1px solid #d4d0c8;border-left:1px solid #d4d0c8;border-right:1px solid #404040;border-bottom:1px solid #404040;box-shadow:inset 1px 1px 0 #fff,inset -1px -1px 0 #808080"><div class="a" style="left:50%;top:50%;transform:translate(-50%,-50%);width:0;height:0;border-left:3.5px solid transparent;border-right:3.5px solid transparent;border-bottom:4px solid #000"></div></div>
<div class="a" style="left:899px;top:206px;width:14px;height:14px;background:#d4d0c8;border-top:1px solid #d4d0c8;border-left:1px solid #d4d0c8;border-right:1px solid #404040;border-bottom:1px solid #404040;box-shadow:inset 1px 1px 0 #fff,inset -1px -1px 0 #808080"><div class="a" style="left:50%;top:50%;transform:translate(-50%,-50%);width:0;height:0;border-left:3.5px solid transparent;border-right:3.5px solid transparent;border-top:4px solid #000"></div></div>
<div class="inp" style="left:927px;top:192px;width:55px;height:28px;background:#fff"></div>
<div class="t" style="left:927px;top:195.6px;width:55px;text-align:center;font-size:16.5px;font-weight:bold;color:#000080">00</div>
<div class="a" style="left:983px;top:192px;width:14px;height:14px;background:#d4d0c8;border-top:1px solid #d4d0c8;border-left:1px solid #d4d0c8;border-right:1px solid #404040;border-bottom:1px solid #404040;box-shadow:inset 1px 1px 0 #fff,inset -1px -1px 0 #808080"><div class="a" style="left:50%;top:50%;transform:translate(-50%,-50%);width:0;height:0;border-left:3.5px solid transparent;border-right:3.5px solid transparent;border-bottom:4px solid #000"></div></div>
<div class="a" style="left:983px;top:206px;width:14px;height:14px;background:#d4d0c8;border-top:1px solid #d4d0c8;border-left:1px solid #d4d0c8;border-right:1px solid #404040;border-bottom:1px solid #404040;box-shadow:inset 1px 1px 0 #fff,inset -1px -1px 0 #808080"><div class="a" style="left:50%;top:50%;transform:translate(-50%,-50%);width:0;height:0;border-left:3.5px solid transparent;border-right:3.5px solid transparent;border-top:4px solid #000"></div></div>
<div class="a" style="left:1025px;top:184px;width:322px;height:22px;border-top:1px solid #fff;border-left:1px solid #fff;border-right:1px solid #808080;border-bottom:1px solid #808080"></div>
<div class="vsep" style="left:1029px;top:187px;height:16px"></div>
<div class="vsep" style="left:1090px;top:187px;height:16px"></div>
<div class="vsep" style="left:1152px;top:187px;height:16px"></div>
<div class="vsep" style="left:1159px;top:187px;height:16px"></div>
<div class="vsep" style="left:1220px;top:187px;height:16px"></div>
<svg class="a" style="left:1025px;top:184.0px" width="160" height="22" viewBox="0 0 160 22">
<path d="M16.5 6.5 h4.5 l2.5 3 v5.5 h-7z" fill="#30e0e0" stroke="#2a4a4a" stroke-width="1"/>
<path d="M20.5 4.5 v2.5 l3 3" stroke="#000" stroke-width="1.3" fill="none"/>
<g fill="#222"><circle cx="14.5" cy="6" r="0.8"/><circle cx="25" cy="6" r="0.8"/><circle cx="14.3" cy="10" r="0.9"/><circle cx="25.5" cy="11" r="0.9"/><circle cx="14.8" cy="16" r="0.8"/><circle cx="25.5" cy="16.3" r="0.8"/><circle cx="19.5" cy="16.3" r="0.8"/></g>
<rect x="75" y="5" width="4.8" height="5.6" fill="#7a7a7a"/>
<rect x="77.6" y="6" width="1" height="3.6" fill="#c0c0c0"/>
<rect x="75" y="11" width="5" height="0.8" fill="#fff"/>
<path d="M81.5 6.8 q3 0.5 3.2 4.2" stroke="#7a7a7a" stroke-width="1.6" fill="none"/>
<path d="M82.6 10.6 h4.4 l-2.2 2.6z" fill="#7a7a7a"/>
<rect x="79" y="13" width="7.5" height="3.4" fill="#e8e8e8" stroke="#8a8a8a" stroke-width="1"/>
<rect x="143" y="4" width="13.6" height="13.6" fill="#858286"/>
<path d="M156.6 4 v14.2 h-13.6" stroke="#fff" stroke-width="0.8" fill="none"/>
<circle cx="146.5" cy="6.3" r="0.9" fill="#c8c8c8"/>
<rect x="146.8" y="8.3" width="1.3" height="8" fill="#f0f0f0"/>
</svg>
<div class="t" style="left:1068px;top:190.4px;font-size:9.6px;color:#111">Add</div>
<div class="t" style="left:1116px;top:190.4px;font-size:9.4px;color:#8a8a8a;letter-spacing:0px">Update</div>
<div class="t" style="left:1187px;top:190.4px;font-size:9.4px;color:#8a8a8a;letter-spacing:0px">Delete</div>
<div class="a" style="left:562px;top:220px;width:789px;height:59px;background:#fff;border-top:1px solid #404040;border-left:1px solid #404040;border-bottom:1px solid #404040;border-right:1px solid #d4d0c8"></div>
<div class="a" style="left:1336px;top:221px;width:14px;height:57px;background-color:#ece9e4;background-image:repeating-conic-gradient(#fff 0 25%, #d4d0c8 0 50%);background-size:2px 2px"></div>
<div class="a" style="left:1335px;top:221px;width:1px;height:57px;background:#404040"></div>
<div class="a" style="left:1336px;top:221px;width:14px;height:14px;background:#d4d0c8;border-top:1px solid #d4d0c8;border-left:1px solid #d4d0c8;border-right:1px solid #404040;border-bottom:1px solid #404040;box-shadow:inset 1px 1px 0 #fff,inset -1px -1px 0 #808080"><div class="a" style="left:50%;top:50%;transform:translate(-50%,-50%);width:0;height:0;border-left:3.5px solid transparent;border-right:3.5px solid transparent;border-bottom:4px solid #909090"></div></div>
<div class="a" style="left:1336px;top:265px;width:14px;height:14px;background:#d4d0c8;border-top:1px solid #d4d0c8;border-left:1px solid #d4d0c8;border-right:1px solid #404040;border-bottom:1px solid #404040;box-shadow:inset 1px 1px 0 #fff,inset -1px -1px 0 #808080"><div class="a" style="left:50%;top:50%;transform:translate(-50%,-50%);width:0;height:0;border-left:3.5px solid transparent;border-right:3.5px solid transparent;border-top:4px solid #909090"></div></div>
<div class="a" style="left:563px;top:285px;width:786px;height:115px;background:#858286;border-top:1px solid #404040;border-left:1px solid #404040;border-right:1px solid #fff;border-bottom:1px solid #fff"></div>
<div class="a" style="left:564px;top:286px;width:235px;height:17px;background:#d4d0c8;border-top:1px solid #fff;border-left:1px solid #fff;border-right:1px solid #000;border-bottom:1px solid #000"></div>
<div class="t" style="left:567px;top:289px;font-size:12.5px;color:#222;letter-spacing:0.05px">No Findings Text were Found !</div>
<div class="grp" style="left:548px;top:421px;width:816px;height:321px"></div>
<div class="a" style="left:553px;top:414px;width:100px;height:14px;background:#d4d0c8"></div>
<div class="t" style="left:556px;top:414.2px;font-size:14px;font-weight:bold;color:#111">Material Used:</div>
<div class="t" style="left:559px;top:435.2px;font-size:16.5px;color:#111">PN:</div>
<div class="t" style="left:590px;top:434px;color:#e01020;font-size:12px">*</div>
<div class="inp" style="left:600px;top:431px;width:222px;height:22px;background:#fff"></div>
<div class="raise" style="left:807px;top:433px;width:14px;height:19px;box-shadow:inset -1px -1px 0 #808080;border-right-color:#404040;border-bottom-color:#404040;border-top-color:#f0f0f0;border-left-color:#f0f0f0"><div class="a" style="left:3px;top:6px;width:0;height:0;border-left:3.5px solid transparent;border-right:3.5px solid transparent;border-top:4px solid #000"></div></div>
<div class="inp" style="left:829px;top:438px;width:11px;height:11px;background:#fff;border-color:#808080 #fff #fff #808080;box-shadow:inset 1px 1px 0 #404040"></div>
<div class="t" style="left:845px;top:436.3px;font-size:14.5px;font-weight:bold;color:#c0101c">Additional:</div>
<div class="a" style="left:955px;top:430px;width:392px;height:20px;border-top:1px solid #fff;border-left:1px solid #fff;border-right:1px solid #808080;border-bottom:1px solid #808080"></div>
<div class="vsep" style="left:959px;top:433px;height:14px"></div>
<div class="vsep" style="left:1020px;top:433px;height:14px"></div>
<div class="vsep" style="left:1082px;top:433px;height:14px"></div>
<div class="vsep" style="left:1089px;top:433px;height:14px"></div>
<div class="vsep" style="left:1150px;top:433px;height:14px"></div>
<svg class="a" style="left:955px;top:429.0px" width="160" height="22" viewBox="0 0 160 22">
<path d="M16.5 6.5 h4.5 l2.5 3 v5.5 h-7z" fill="#30e0e0" stroke="#2a4a4a" stroke-width="1"/>
<path d="M20.5 4.5 v2.5 l3 3" stroke="#000" stroke-width="1.3" fill="none"/>
<g fill="#222"><circle cx="14.5" cy="6" r="0.8"/><circle cx="25" cy="6" r="0.8"/><circle cx="14.3" cy="10" r="0.9"/><circle cx="25.5" cy="11" r="0.9"/><circle cx="14.8" cy="16" r="0.8"/><circle cx="25.5" cy="16.3" r="0.8"/><circle cx="19.5" cy="16.3" r="0.8"/></g>
<rect x="75" y="5" width="4.8" height="5.6" fill="#7a7a7a"/>
<rect x="77.6" y="6" width="1" height="3.6" fill="#c0c0c0"/>
<rect x="75" y="11" width="5" height="0.8" fill="#fff"/>
<path d="M81.5 6.8 q3 0.5 3.2 4.2" stroke="#7a7a7a" stroke-width="1.6" fill="none"/>
<path d="M82.6 10.6 h4.4 l-2.2 2.6z" fill="#7a7a7a"/>
<rect x="79" y="13" width="7.5" height="3.4" fill="#e8e8e8" stroke="#8a8a8a" stroke-width="1"/>
<rect x="143" y="4" width="13.6" height="13.6" fill="#858286"/>
<path d="M156.6 4 v14.2 h-13.6" stroke="#fff" stroke-width="0.8" fill="none"/>
<circle cx="146.5" cy="6.3" r="0.9" fill="#c8c8c8"/>
<rect x="146.8" y="8.3" width="1.3" height="8" fill="#f0f0f0"/>
</svg>
<div class="t" style="left:998px;top:435.4px;font-size:9.6px;color:#111">Add</div>
<div class="t" style="left:1046px;top:435.4px;font-size:9.4px;color:#8a8a8a;letter-spacing:0px">Update</div>
<div class="t" style="left:1117px;top:435.4px;font-size:9.4px;color:#8a8a8a;letter-spacing:0px">Delete</div>
<div class="a" style="left:1335px;top:413px;width:29px;height:27px;background:#c6c4f8;border-top:1px solid #fff;border-left:1px solid #fff;border-right:1px solid #555;border-bottom:1px solid #555;box-shadow:inset -1px -1px 0 #8c8ab0"></div>
<svg class="a" style="left:1343px;top:418px" width="12" height="15" viewBox="0 0 12 15">
<path d="M6 1 L11 7 H7.3 V14.5 H4.7 V7 H1 Z" fill="#000"/>
</svg>
<div class="t" style="left:673px;top:466.8px;font-size:16.8px;color:#111">Description:</div>
<div class="t" style="left:773px;top:467px;color:#e01020;font-size:12px">*</div>
<div class="t" style="left:931px;top:466.8px;font-size:16.8px;color:#111">Batch No.:</div>
<div class="t" style="left:1054px;top:466.8px;font-size:16.8px;color:#111">Item:</div>
<div class="t" style="left:1132px;top:466.8px;font-size:16.8px;color:#111">Qty:</div>
<div class="t" style="left:1166px;top:467px;color:#e01020;font-size:12px">*</div>
<div class="t" style="left:1204px;top:466.8px;font-size:16.8px;color:#111">Unit:</div>
<div class="t" style="left:1240px;top:467px;color:#e01020;font-size:12px">*</div>
<div class="t" style="left:1294px;top:466.8px;font-size:16.8px;color:#111">Price:</div>
<div class="a" style="left:562px;top:486px;width:339px;height:26px;background:#fff;border:1px solid #303030;border-top-color:#505050"></div>
<div class="a" style="left:903px;top:486px;width:129px;height:26px;background:#fff;border:1px solid #303030;border-top-color:#505050"></div>
<div class="a" style="left:1036px;top:486px;width:72px;height:26px;background:#fff;border:1px solid #303030;border-top-color:#505050"></div>
<div class="a" style="left:1110px;top:486px;width:72px;height:26px;background:#fff;border:1px solid #303030;border-top-color:#505050"></div>
<div class="a" style="left:1271px;top:486px;width:87px;height:26px;background:#fff;border:1px solid #303030;border-top-color:#505050"></div>
<div class="t" style="left:1110px;top:489px;width:72px;text-align:center;font-size:14.5px;font-weight:bold;color:#000080">1</div>
<div class="t" style="left:1271px;top:489px;width:87px;text-align:center;font-size:15px;font-weight:bold;color:#000080">0.00</div>
<div class="inp" style="left:1185px;top:487px;width:84px;height:22px;background:#fff"></div>
<div class="raise" style="left:1255px;top:489px;width:13px;height:19px;box-shadow:inset -1px -1px 0 #808080;border-right-color:#404040;border-bottom-color:#404040;border-top-color:#f0f0f0;border-left-color:#f0f0f0"><div class="a" style="left:2px;top:6px;width:0;height:0;border-left:3.5px solid transparent;border-right:3.5px solid transparent;border-top:4px solid #000"></div></div>
<div class="t" style="left:1186.5px;top:490.5px;font-size:13.5px;font-weight:bold;color:#000080">EA</div>
<div class="a" style="left:563px;top:519px;width:786px;height:220px;background:#858286;border-top:1px solid #404040;border-left:1px solid #404040;border-right:1px solid #fff;border-bottom:1px solid #fff"></div>
<div class="a" style="left:564px;top:520px;width:235px;height:17px;background:#d4d0c8;border-top:1px solid #fff;border-left:1px solid #fff;border-right:1px solid #000;border-bottom:1px solid #000"></div>
<div class="t" style="left:567px;top:523px;font-size:12.5px;color:#222;letter-spacing:0.05px">No Used Materials were Found !</div>
<svg class="a" style="left:200px;top:180px" width="130" height="150" viewBox="200 180 130 150">
<path d="M226.7 201.7 L275 299 L304 283 Z" fill="#1e90ff"/>
<circle cx="295" cy="301.5" r="20" fill="none" stroke="#2a2a2a" stroke-width="1.4"/>
<circle cx="295" cy="301.5" r="18.8" fill="#1e90ff" stroke="#fff" stroke-width="1.2"/>
<text x="295" y="308.5" text-anchor="middle" font-family="Liberation Sans" font-weight="bold" font-size="19" fill="#fff">4</text>
</svg>
</body></html>
